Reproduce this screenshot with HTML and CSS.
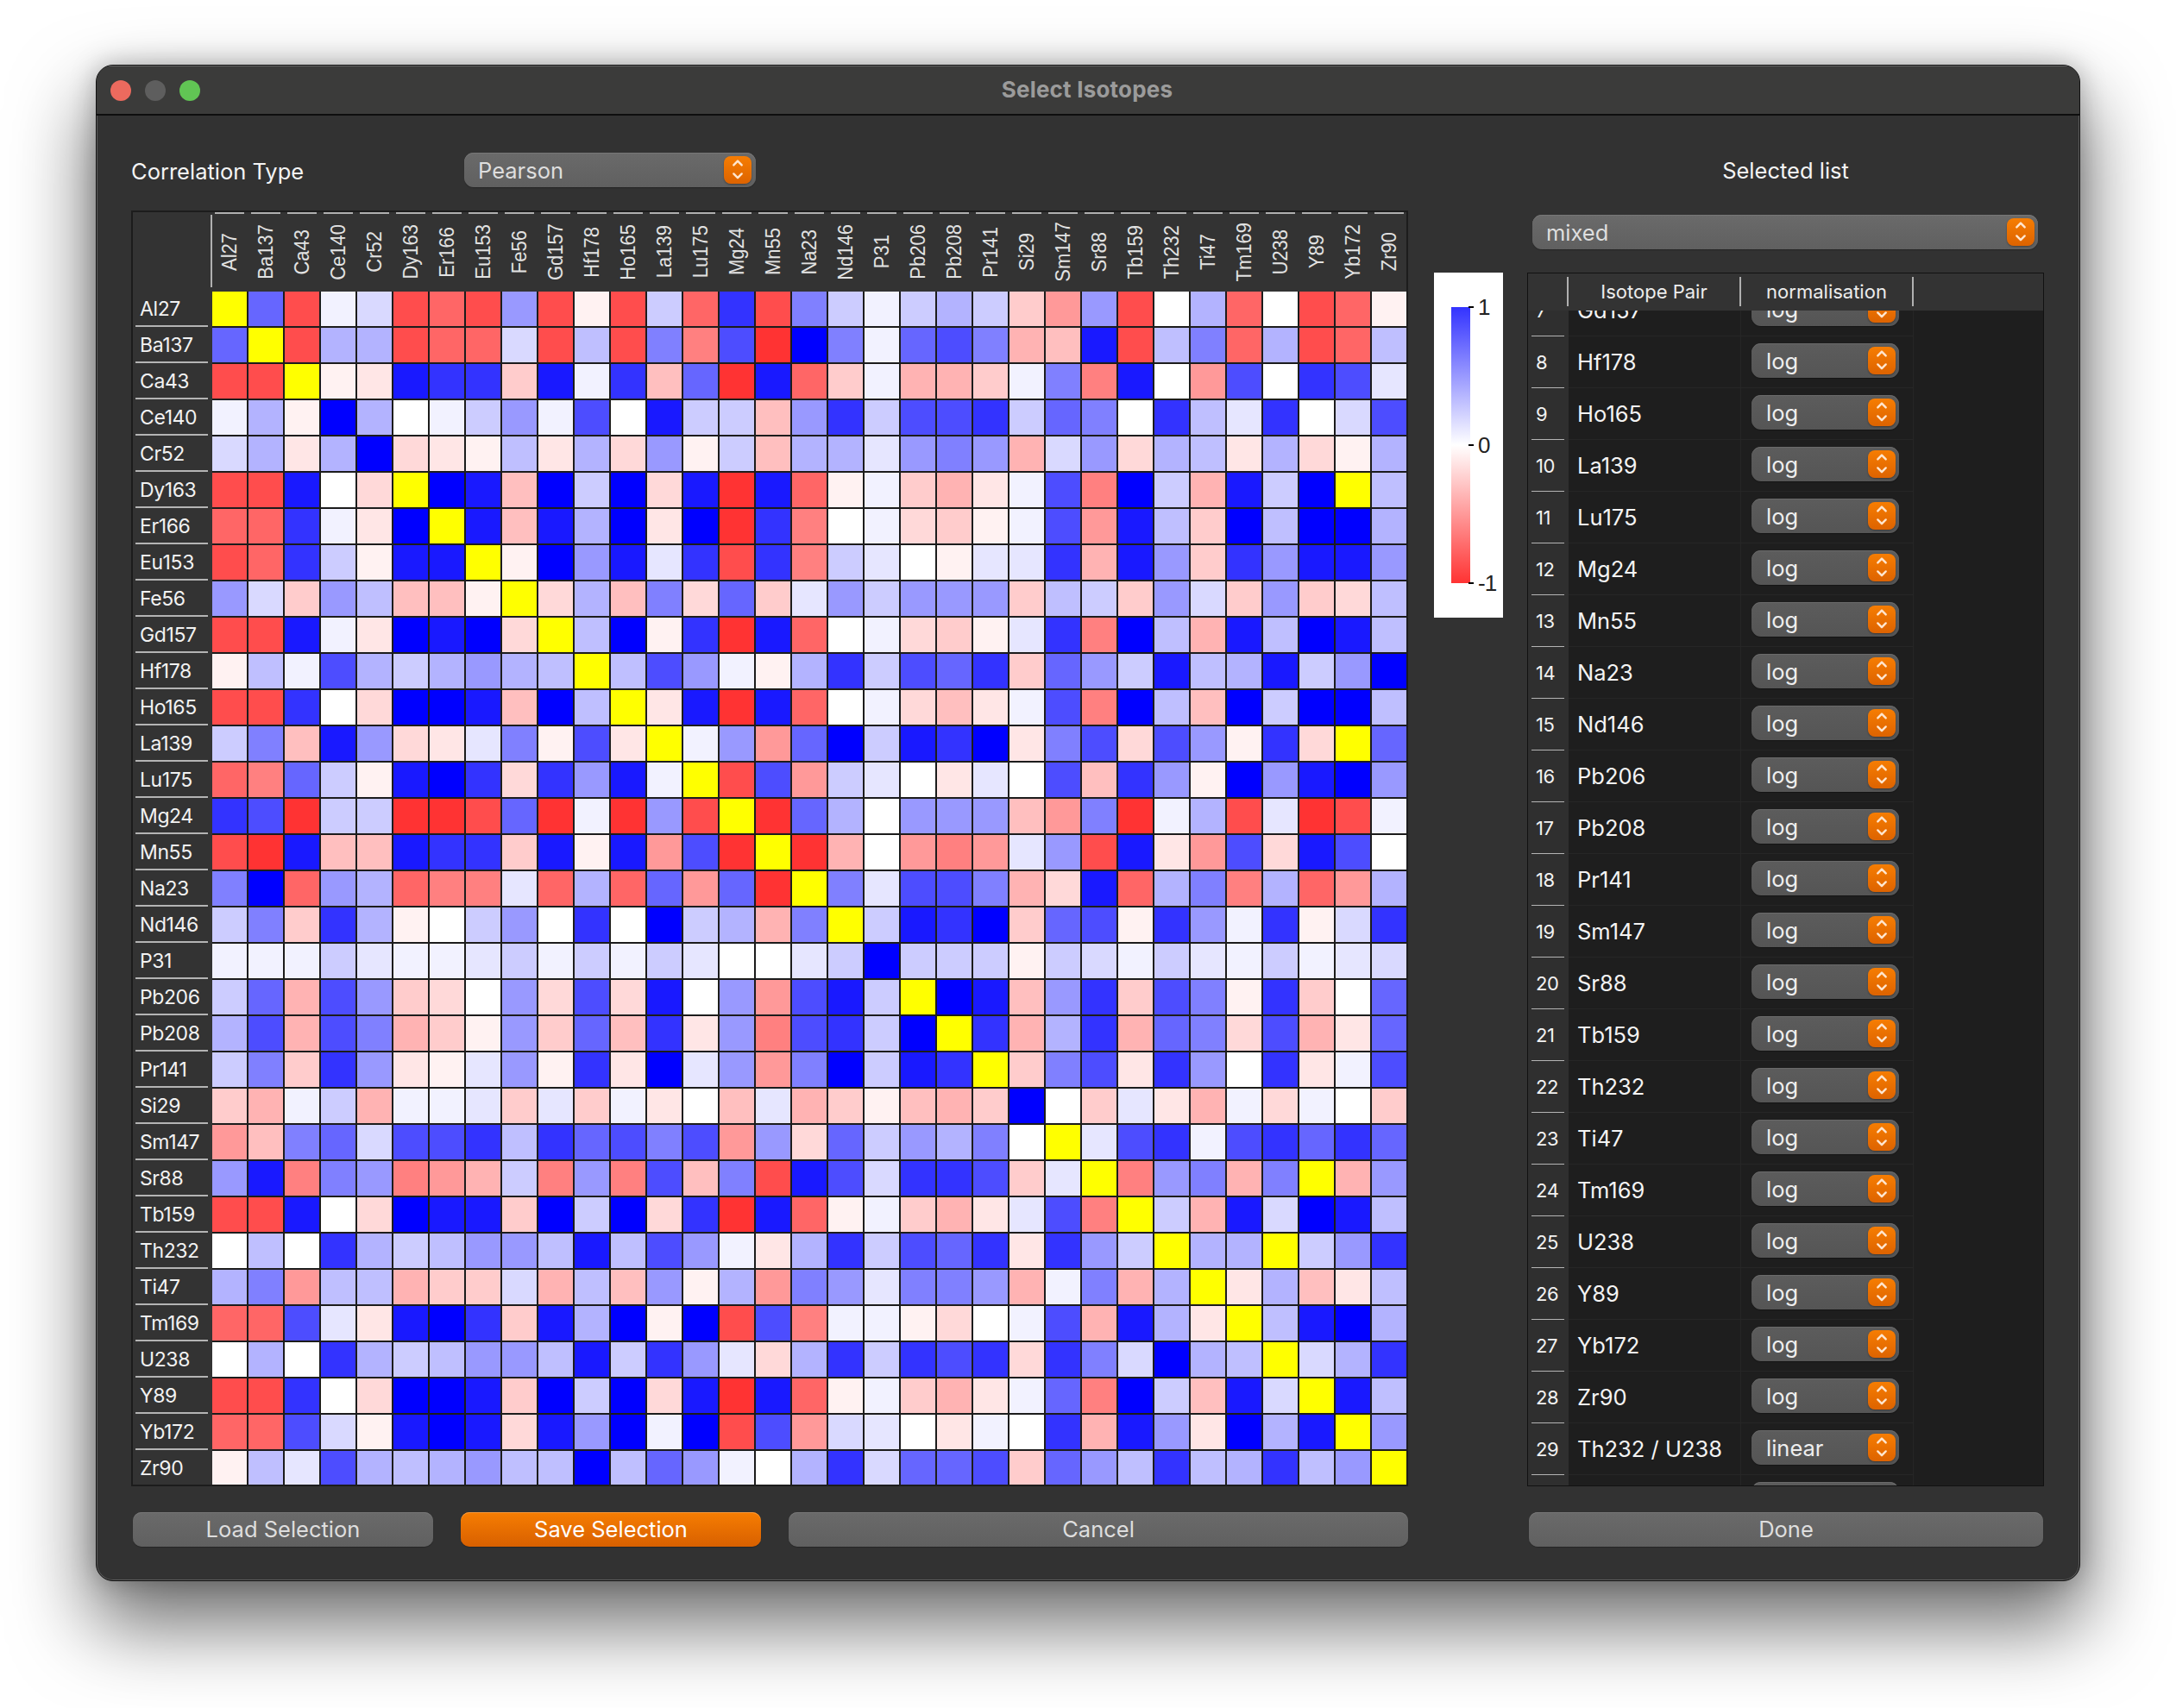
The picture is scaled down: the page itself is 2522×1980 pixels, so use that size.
FILE: index.html
```html
<!DOCTYPE html>
<html lang="en">
<head>
<meta charset="utf-8">
<title>Select Isotopes</title>
<link rel="stylesheet" href="styles.css">
</head>
<body>
<svg class="defs" width="0" height="0" aria-hidden="true">
  <symbol id="chev" viewBox="0 0 32 32"><path d="M11.3 10.4 16 5.6l4.7 4.8M11.3 20.4 16 25.2l4.7-4.8" fill="none" stroke-width="2.4" stroke-linecap="round" stroke-linejoin="round"/></symbol>
</svg>
<main class="window">
  <header class="titlebar">
    <div class="lights"><span class="light red"></span><span class="light grey"></span><span class="light green"></span></div>
    <h1 class="title">Select Isotopes</h1>
    <div></div>
  </header>
  <div class="content">
    <section class="left">
      <div class="corr-row">
        <span class="label corr-label">Correlation Type</span>
        <div class="combo corr-combo"><span>Pearson</span><span class="arrow"><svg class="chev"><use href="#chev"/></svg></span></div>
      </div>
      <div class="heat-frame"><div class="heatmap" id="heatmap"></div></div>
      <div class="buttons">
        <button class="btn load">Load Selection</button>
        <button class="btn save">Save Selection</button>
        <button class="btn cancel">Cancel</button>
      </div>
    </section>
    <aside class="middle">
      <div class="colorbar">
        <div class="cb-grad"></div>
        <div class="cb-scale">
          <div class="cb-tick"><i></i><span>1</span></div>
          <div class="cb-tick"><i></i><span>0</span></div>
          <div class="cb-tick"><i></i><span>-1</span></div>
        </div>
      </div>
    </aside>
    <section class="right">
      <div class="label sel-label">Selected list</div>
      <div class="combo mixed-combo"><span>mixed</span><span class="arrow"><svg class="chev"><use href="#chev"/></svg></span></div>
      <div class="list-frame">
        <div class="list-head">
          <div class="lh corner"></div>
          <div class="lh pair">Isotope Pair</div>
          <div class="lh norm">normalisation</div>
        </div>
        <div class="list-view"><div class="list-rows" id="rows"></div></div>
      </div>
      <button class="btn done">Done</button>
    </section>
  </div>
</main>
<script src="script.js"></script>
</body>
</html>
```
FILE: styles.css
```css
* { box-sizing: border-box; }
html, body { margin: 0; background: #fff; }
body {
  width: 2522px; height: 1980px; overflow: hidden;
  padding: 75px 0 0 111px;
  font-family: Inter, "Liberation Sans", sans-serif;
  color: #f2f2f2;
}
.defs { position: absolute; }
.window {
  width: 2300px; height: 1758px;
  background: #323232;
  border: 1px solid #111;
  border-radius: 20px;
  box-shadow: inset 0 0 0 1px #5c5c5c, 0 46px 90px 6px rgba(0,0,0,.56), 0 0 30px rgba(0,0,0,.26);
  overflow: hidden;
  display: flex; flex-direction: column;
}
.titlebar {
  height: 58px; flex: none;
  background: #3b3b3a;
  border-top: 1px solid #666;
  border-bottom: 2px solid #0e0e0e;
  display: grid; grid-template-columns: 1fr auto 1fr; align-items: center;
}
.lights { display: flex; gap: 16px; padding-left: 16px; }
.light { width: 24px; height: 24px; border-radius: 50%; }
.red { background: #ec6a5e; }
.grey { background: #5e5e5e; }
.green { background: #61c554; }
.title { margin: -3px 0 0 -2px; font-size: 26px; font-weight: 700; color: #9b9b9b; letter-spacing: .2px; }

.content { display: flex; flex: 1; padding-left: 40px; }
.left { width: 1480px; padding-top: 43px; flex: none; }
.label { font-size: 25.5px; color: #f4f4f4; }
.corr-row { display: flex; align-items: center; height: 40px; margin-bottom: 27px; }
.corr-label { width: 386px; position: relative; top: 1px; }

.combo {
  display: flex; align-items: center; justify-content: space-between;
  height: 40px; border-radius: 11px;
  background: linear-gradient(#6a6a6a, #606060);
  box-shadow: inset 0 1px 0 #777, 0 1px 1px rgba(0,0,0,.25);
  padding: 0 4px 0 16px;
  font-size: 25.5px; color: #dedede;
}
.corr-combo { width: 338px; padding-right: 5px; }
.mixed-combo { width: 586px; margin-left: 6px; }
.arrow {
  width: 32px; height: 32px; flex: none; border-radius: 8px;
  background: linear-gradient(#f67d02, #dd6300);
  box-shadow: 0 1px 2px rgba(0,0,0,.35);
}
.chev { display: block; width: 32px; height: 32px; stroke: #ffe6cf; }

.heat-frame {
  width: 1480px; height: 1479px;
  border: 2px solid #1c1c1c;
  background: #333;
  overflow: hidden;
}
.heatmap {
  display: grid;
  grid-template-columns: 92px repeat(33, 42px);
  grid-template-rows: 92px repeat(33, 42px);
  width: 1478px;
}
.hm-corner { margin-top: 3px; height: 84px; border-right: 2px solid #b0b0b0; }
.col-head {
  position: relative;
  display: flex; align-items: center; justify-content: center;
  font-family: "Liberation Sans", sans-serif; font-size: 22px; color: #e2e2e2;
}
.col-head::before {
  content: ""; position: absolute; top: 0; left: 3px; width: 34px; height: 2px; background: #b0b0b0;
}
.col-head span { writing-mode: vertical-rl; transform: rotate(180deg) scaleX(1.06); }
.row-head {
  height: 41px; margin: 0 5px 1px 3px; padding-left: 5px;
  border-bottom: 2px solid #b4b4b4;
  display: flex; align-items: center;
  font-size: 23px; letter-spacing: -.4px; color: #f2f2f2;
}
.cell { border-right: 2px solid #1c1c1c; border-bottom: 2px solid #1c1c1c; }

.middle { width: 80px; margin-left: 30px; padding-top: 182px; flex: none; }
.colorbar {
  width: 80px; height: 400px; background: #fff;
  padding: 40px 0 40px 20px; display: flex;
}
.cb-grad {
  width: 22px; height: 320px;
  background: linear-gradient(#3333ff, #fff 50%, #ff3333);
}
.cb-scale {
  height: 320px; display: flex; flex-direction: column; justify-content: space-between;
}
.cb-tick { height: 0; display: flex; align-items: center; margin-left: -2px; }
.cb-tick i { width: 6px; height: 2px; background: #000; flex: none; margin-right: 5px; }
.cb-tick span { font-family: "Liberation Sans", sans-serif; font-size: 26px; line-height: 1; color: #222; letter-spacing: -1px; }

.right { width: 599px; margin-left: 28px; padding-top: 44px; flex: none; }
.sel-label { height: 40px; line-height: 40px; text-align: center; margin-bottom: 31px; }
.list-frame {
  margin-top: 27px; height: 1407px; width: 599px;
  border: 1px solid #111; background: #1e1e1e;
  display: flex; flex-direction: column; overflow: hidden;
}
.list-head {
  height: 43px; flex: none; background: #333; padding-top: 4px;
  display: grid; grid-template-columns: 47px 200px 200px;
  font-size: 22px; color: #ececec;
  position: relative;
}
.lh { height: 34px; border-right: 2px solid #b0b0b0; display: flex; align-items: center; justify-content: center; }
.list-view { flex: 1; overflow: hidden; }
.list-rows { margin-top: -30px; }
.row {
  height: 60px;
  display: grid; grid-template-columns: 47px 200px 200px;
}
.num {
  background: #2f2f2f; position: relative;
  display: flex; align-items: center; padding-left: 9px;
  font-size: 22px; letter-spacing: -.4px; color: #f2f2f2;
}
.num::after {
  content: ""; position: absolute; left: 4px; right: 5px; bottom: -1px; height: 2px; background: #b4b4b4;
}
.pair-cell {
  display: flex; align-items: center; padding-left: 10px;
  font-size: 25.5px; color: #f4f4f4;
  border-right: 1px solid #262626; border-bottom: 1px solid #262626;
}
.norm-cell {
  padding: 8px 0 0 12px;
  border-right: 1px solid #262626; border-bottom: 1px solid #262626;
}
.row-combo {
  width: 171px; padding-left: 17px;
  background: linear-gradient(#5c5c5c, #555);
  box-shadow: inset 0 1px 0 #6a6a6a, 0 1px 1px rgba(0,0,0,.3);
  color: #eee;
}

.buttons { display: flex; margin: 30px 0 0 2px; }
.btn {
  height: 40px; border: 0; border-radius: 10px; padding: 0 0 2px;
  font-family: inherit; font-size: 25.5px;
  background: linear-gradient(#6a6a6a, #606060);
  box-shadow: inset 0 1px 0 #777, 0 1px 1px rgba(0,0,0,.25);
  color: #dedede;
}
.load { width: 348px; }
.save {
  width: 348px; margin-left: 32px; color: #fff;
  background: linear-gradient(#f67d02, #d86000);
  box-shadow: inset 0 1px 0 #fa9a3a, 0 1px 1px rgba(0,0,0,.25);
}
.cancel { width: 718px; margin-left: 32px; }
.done { display: block; width: 596px; margin: 30px 0 0 2px; }
```
FILE: script.js
```js
var names = ["Al27","Ba137","Ca43","Ce140","Cr52","Dy163","Er166","Eu153","Fe56","Gd157","Hf178","Ho165","La139","Lu175","Mg24","Mn55","Na23","Nd146","P31","Pb206","Pb208","Pr141","Si29","Sm147","Sr88","Tb159","Th232","Ti47","Tm169","U238","Y89","Yb172","Zr90"];
// Upper triangle of the correlation matrix, one character per pair.
var tri = [
"6guvgfg4grg2f8g52u232bd4g03f0gfr",
"g33gffvgwg5e7hX5u675ct9gw5f3gfw",
"ra988b9u8t6h9fbuccbu5e90d70871",
"30u24u70922t48277826508w180v7",
"sarwa3s4r2t331454cv4s3wa3sr3",
"X9tX2Xs9h9frubcau7eX2c92XYw",
"9t93XaXh8e0usbru7d9wbXwXX3",
"rX4918g8e210r118c94b84994",
"s3t5s6b142444bw2b4vb4bsw",
"wXr8h9f0usbr18eXwc9wX9w",
"w74ur382768b6429w3924X",
"a9h9f0ustau7eXwtX2XXw",
"u4d6X298Xa57s74r8sY6",
"g7d210a107t84rX49X4",
"h630444td5hu3g1hgu",
"hc0ded14g9ad7s970",
"51775cs9f35e3fd3",
"298Xb67r84u8rv8",
"222r2vu21u2u1v",
"X9t48b75r8b06",
"8c38c65s7ca6",
"b57a8408au7",
"0b1acusu0b",
"178u78686",
"e45c5Yc4",
"2c9vX9w",
"33Y248",
"a3taw",
"w9X3",
"v38",
"9w",
"4"
];
// The selection highlight is only on the upper triangle; the true value shows below it.
var lowerOf = {"31,5":"9", "31,12":"u", "30,24":"e", "29,26":"X"};
var blue = {"0":0,u:.05,"1":.1,v:.15,"2":.2,w:.25,"3":.3,"4":.4,"5":.5,"6":.6,"7":.7,"8":.8,"9":.9,X:1};
var red = {r:.05,a:.1,s:.15,b:.2,t:.25,c:.3,d:.4,e:.5,f:.6,g:.7,h:.8};
function color(c) {
  if (c === "Y") return "#ffff00";
  if (c in red) { var r = Math.round(255 * (1 - red[c])); return "rgb(255," + r + "," + r + ")"; }
  var b = Math.round(255 * (1 - blue[c])); return "rgb(" + b + "," + b + ",255)";
}
var blueDiag = {3:1, 4:1, 18:1, 22:1};
function pair(i, j) {
  if (i === j) return blueDiag[i] ? "X" : "Y";
  if (i < j) return tri[i].charAt(j - i - 1);
  return lowerOf[i + "," + j] || tri[j].charAt(i - j - 1);
}
function el(parent, cls, text) {
  var d = document.createElement("div");
  d.className = cls;
  if (text !== undefined) d.textContent = text;
  parent.appendChild(d);
  return d;
}
var hm = document.getElementById("heatmap");
el(hm, "hm-corner");
names.forEach(function (n) {
  var h = el(hm, "col-head");
  var s = document.createElement("span");
  s.textContent = n;
  h.appendChild(s);
});
names.forEach(function (n, i) {
  el(hm, "row-head", n);
  names.forEach(function (m, j) {
    el(hm, "cell").style.background = color(pair(i, j));
  });
});
var list = ["Gd157","Hf178","Ho165","La139","Lu175","Mg24","Mn55","Na23","Nd146","Pb206","Pb208","Pr141","Sm147","Sr88","Tb159","Th232","Ti47","Tm169","U238","Y89","Yb172","Zr90","Th232 / U238",""];
var rows = document.getElementById("rows");
list.forEach(function (n, k) {
  var r = el(rows, "row");
  el(r, "num", String(k + 7));
  el(r, "pair-cell", n);
  var c = el(r, "norm-cell");
  var combo = el(c, "combo row-combo");
  var t = document.createElement("span");
  t.textContent = k >= 22 ? "linear" : "log";
  combo.appendChild(t);
  var a = document.createElement("span");
  a.className = "arrow";
  a.innerHTML = '<svg class="chev"><use href="#chev"/></svg>';
  combo.appendChild(a);
});
```
